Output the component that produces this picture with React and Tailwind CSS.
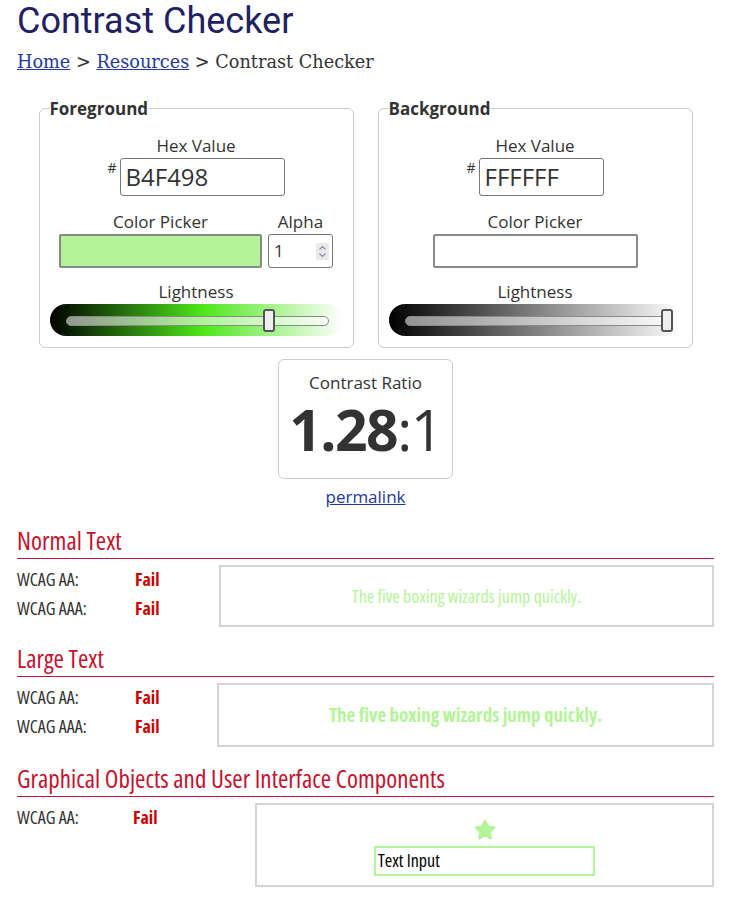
import { Star } from "lucide-react";

const sans = "font-['Open_Sans',sans-serif]";

function LightnessSlider({ gradientClass, value }) {
  return (
    <div className={`relative h-8 w-full rounded-full ${gradientClass}`}>
      <div className="absolute left-4 right-[14px] top-3 h-[10px] rounded-full border border-[#8a8a8a] bg-white/55" />
      <div
        className="absolute top-[5px] h-[23px] w-3 rounded-[3px] border-2 border-[#555] bg-[#eeeeee]"
        style={{ left: `calc(16px + (100% - 30px) * ${value} - 7px)` }}
      />
    </div>
  );
}

function HexField({ value, width }) {
  return (
    <div className="flex items-start">
      <span className="mt-[3px] mr-[3px] text-[14px] leading-none text-[#333]">#</span>
      <div
        className={`flex h-[38px] items-center rounded-[3px] border border-[#767676] bg-white px-[5px] text-[24px] text-[#333] ${width}`}
      >
        {value}
      </div>
    </div>
  );
}

function ColorFieldset({ legend, hex, swatchClass, swatchWidth, withAlpha, gradientClass, lightness }) {
  return (
    <fieldset className="w-[315px] rounded-md border border-[#cccccc] px-[10px] pb-[11px]">
      <legend className="px-0 text-[17px] font-bold leading-[23px] text-[#333]">{legend}</legend>
      <div className="mt-[14px] flex flex-col items-center">
        <p className="text-[17px] leading-6 text-[#333]">Hex Value</p>
        <HexField value={hex} width={withAlpha ? "w-[165px]" : "w-[125px]"} />

        <div className="mt-[14px] flex gap-[6px]">
          <div className="flex flex-col items-center">
            <p className="text-[17px] leading-6 text-[#333]">Color Picker</p>
            <div className={`h-[34px] rounded-[2px] border-2 border-[#888] ${swatchClass} ${swatchWidth}`} />
          </div>
          {withAlpha ? (
            <div className="flex flex-col items-center">
              <p className="text-[17px] leading-6 text-[#333]">Alpha</p>
              <div className="flex h-[34px] w-[65px] items-center justify-between rounded-[3px] border border-[#767676] bg-white pl-[5px] pr-[3px] text-[17px] text-[#333]">
                <span>1</span>
                <span className="flex h-[17px] w-[13px] flex-col items-center justify-center rounded-[2px] bg-[#e9e9ed]">
                  <svg width="9" height="13" viewBox="0 0 9 13" fill="none" stroke="#8d8d99" strokeWidth="1.2">
                    <path d="M1.5 4.5 L4.5 1.5 L7.5 4.5" />
                    <path d="M1.5 8.5 L4.5 11.5 L7.5 8.5" />
                  </svg>
                </span>
              </div>
            </div>
          ) : null}
        </div>

        <p className="mt-[12px] text-[17px] leading-6 text-[#333]">Lightness</p>
        <LightnessSlider gradientClass={gradientClass} value={lightness} />
      </div>
    </fieldset>
  );
}

function ResultRows({ rows, labelWidth, colClass }) {
  return (
    <div className={`grid shrink-0 content-start ${labelWidth}`}>
      {rows.map((row) => (
        <div key={row} className={`grid text-[18px] leading-[29px] ${colClass}`}>
          <span className="text-[#333]">{row}</span>
          <span className="font-bold text-[#cc0000]">Fail</span>
        </div>
      ))}
    </div>
  );
}

function CheckSection({ title, rows, labelWidth, colClass = "grid-cols-[118px_auto]", boxClass, spacing, children }) {
  return (
    <section className={`font-stretch-condensed ${spacing}`}>
      <h2 className="border-b border-[#c4122f] pb-[3px] text-[25px] leading-[29px] text-[#c4122f]">{title}</h2>
      <div className="mt-[6px] flex">
        <ResultRows rows={rows} labelWidth={labelWidth} colClass={colClass} />
        <div className={`flex flex-1 flex-col items-center justify-center border-2 border-[#d4d4d4] ${boxClass}`}>
          {children}
        </div>
      </div>
    </section>
  );
}

export default function App() {
  return (
    <div className={`min-h-screen bg-white px-[17px] pb-6 text-[#333] ${sans}`}>
      <h1 className="font-['Roboto',sans-serif] text-[36px] leading-[42px] text-[#1f2162]">Contrast Checker</h1>
      <nav className="mt-[8px] font-['DejaVu_Serif',serif] text-[17.7px] leading-6 text-[#333]">
        <a href="#" className="text-[#24399c] underline">Home</a> &gt;{" "}
        <a href="#" className="text-[#24399c] underline">Resources</a> &gt; Contrast Checker
      </nav>

      <div className="mt-[23px] flex justify-center gap-[24px]">
        <ColorFieldset
          legend="Foreground"
          hex="B4F498"
          swatchClass="bg-[#b4f498]"
          swatchWidth="w-[203px]"
          withAlpha
          gradientClass="bg-[linear-gradient(to_right,#000000,#4ee61a_52%,#ffffff)]"
          lightness={0.776}
        />
        <ColorFieldset
          legend="Background"
          hex="FFFFFF"
          swatchClass="bg-white"
          swatchWidth="w-[205px]"
          gradientClass="bg-[linear-gradient(to_right,#000000,#808080_50%,#ffffff)]"
          lightness={1}
        />
      </div>

      <div className="mt-[11px] flex flex-col items-center">
        <div className="flex h-[120px] w-[175px] flex-col items-center rounded-md border border-[#cccccc] pt-[14px]">
          <p className="text-[17px] leading-[17px] text-[#333]">Contrast Ratio</p>
          <p className="text-[57px] leading-[76px] tracking-[-1.5px] text-[#333]">
            <span className="font-bold">1.28</span>:1
          </p>
        </div>
        <a href="#" className="mt-[6px] text-[17px] leading-6 text-[#24399c] underline">permalink</a>
      </div>

      <CheckSection
        title="Normal Text"
        rows={["WCAG AA:", "WCAG AAA:"]}
        labelWidth="w-[202px]"
        boxClass="h-[62px]"
        spacing="mt-[17px]"
      >
        <p className="text-[18px] text-[#b4f498]">The five boxing wizards jump quickly.</p>
      </CheckSection>

      <CheckSection
        title="Large Text"
        rows={["WCAG AA:", "WCAG AAA:"]}
        labelWidth="w-[200px]"
        boxClass="h-[64px]"
        spacing="mt-[17px]"
      >
        <p className="text-[19px] font-bold text-[#b4f498]">The five boxing wizards jump quickly.</p>
      </CheckSection>

      <CheckSection
        title="Graphical Objects and User Interface Components"
        rows={["WCAG AA:"]}
        labelWidth="w-[238px]"
        colClass="grid-cols-[116px_auto]"
        boxClass="h-[84px] pt-[3px]"
        spacing="mt-[17px]"
      >
        <Star className="size-[24px] fill-[#b4f498] text-[#b4f498]" strokeWidth={1} />
        <div className="mt-[4px] flex h-[30px] w-[221px] items-center border-2 border-[#b4f498] px-[2px] text-[18px] text-black">
          Text Input
        </div>
      </CheckSection>
    </div>
  );
}
